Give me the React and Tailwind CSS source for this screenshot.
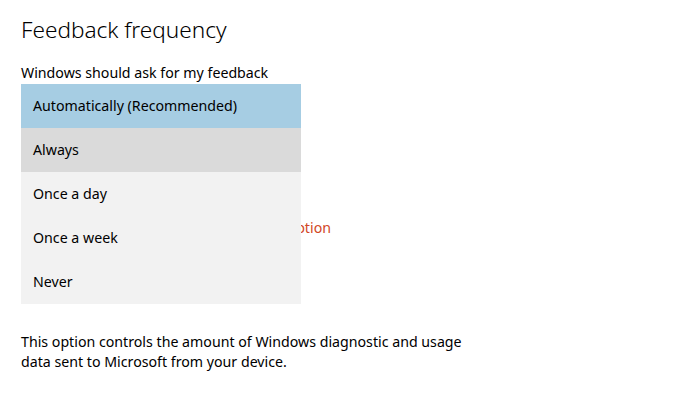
export default function App() {
  const items = [
    { label: "Automatically (Recommended)", cls: "bg-[#a6cde3]" },
    { label: "Always", cls: "bg-[#dadada]" },
    { label: "Once a day", cls: "bg-[#f2f2f2]" },
    { label: "Once a week", cls: "bg-[#f2f2f2]" },
    { label: "Never", cls: "bg-[#f2f2f2]" },
  ];
  return (
    <div className="relative w-[682px] h-[394px] bg-white text-black overflow-hidden font-['Noto_Sans',sans-serif]">
      <div className="flex flex-col pl-[21px] pt-[14px]">
        <div className="text-[22.6px] leading-[32px] font-light text-[#000]">Feedback frequency</div>
        <div className="mt-[17px] text-[14.2px] leading-[20px]">Windows should ask for my feedback</div>
        <div className="mt-[10px] h-[32px] w-[280px] border-2 border-[#999]"></div>
        <div className="mt-[93px] w-[310px] text-right text-[14.2px] leading-[20px] text-[#d24726]">Manage option</div>
        <div className="mt-[94px] text-[14.2px] leading-[20px] w-[460px]">
          This option controls the amount of Windows diagnostic and usage data sent to Microsoft from your device.
        </div>
      </div>
      <div className="absolute left-[21px] top-[84px] w-[280px] flex flex-col">
        {items.map((it) => (
          <div key={it.label} className={`h-[44px] flex items-center pl-[12px] text-[14.2px] text-black ${it.cls}`}>
            {it.label}
          </div>
        ))}
      </div>
    </div>
  );
}
